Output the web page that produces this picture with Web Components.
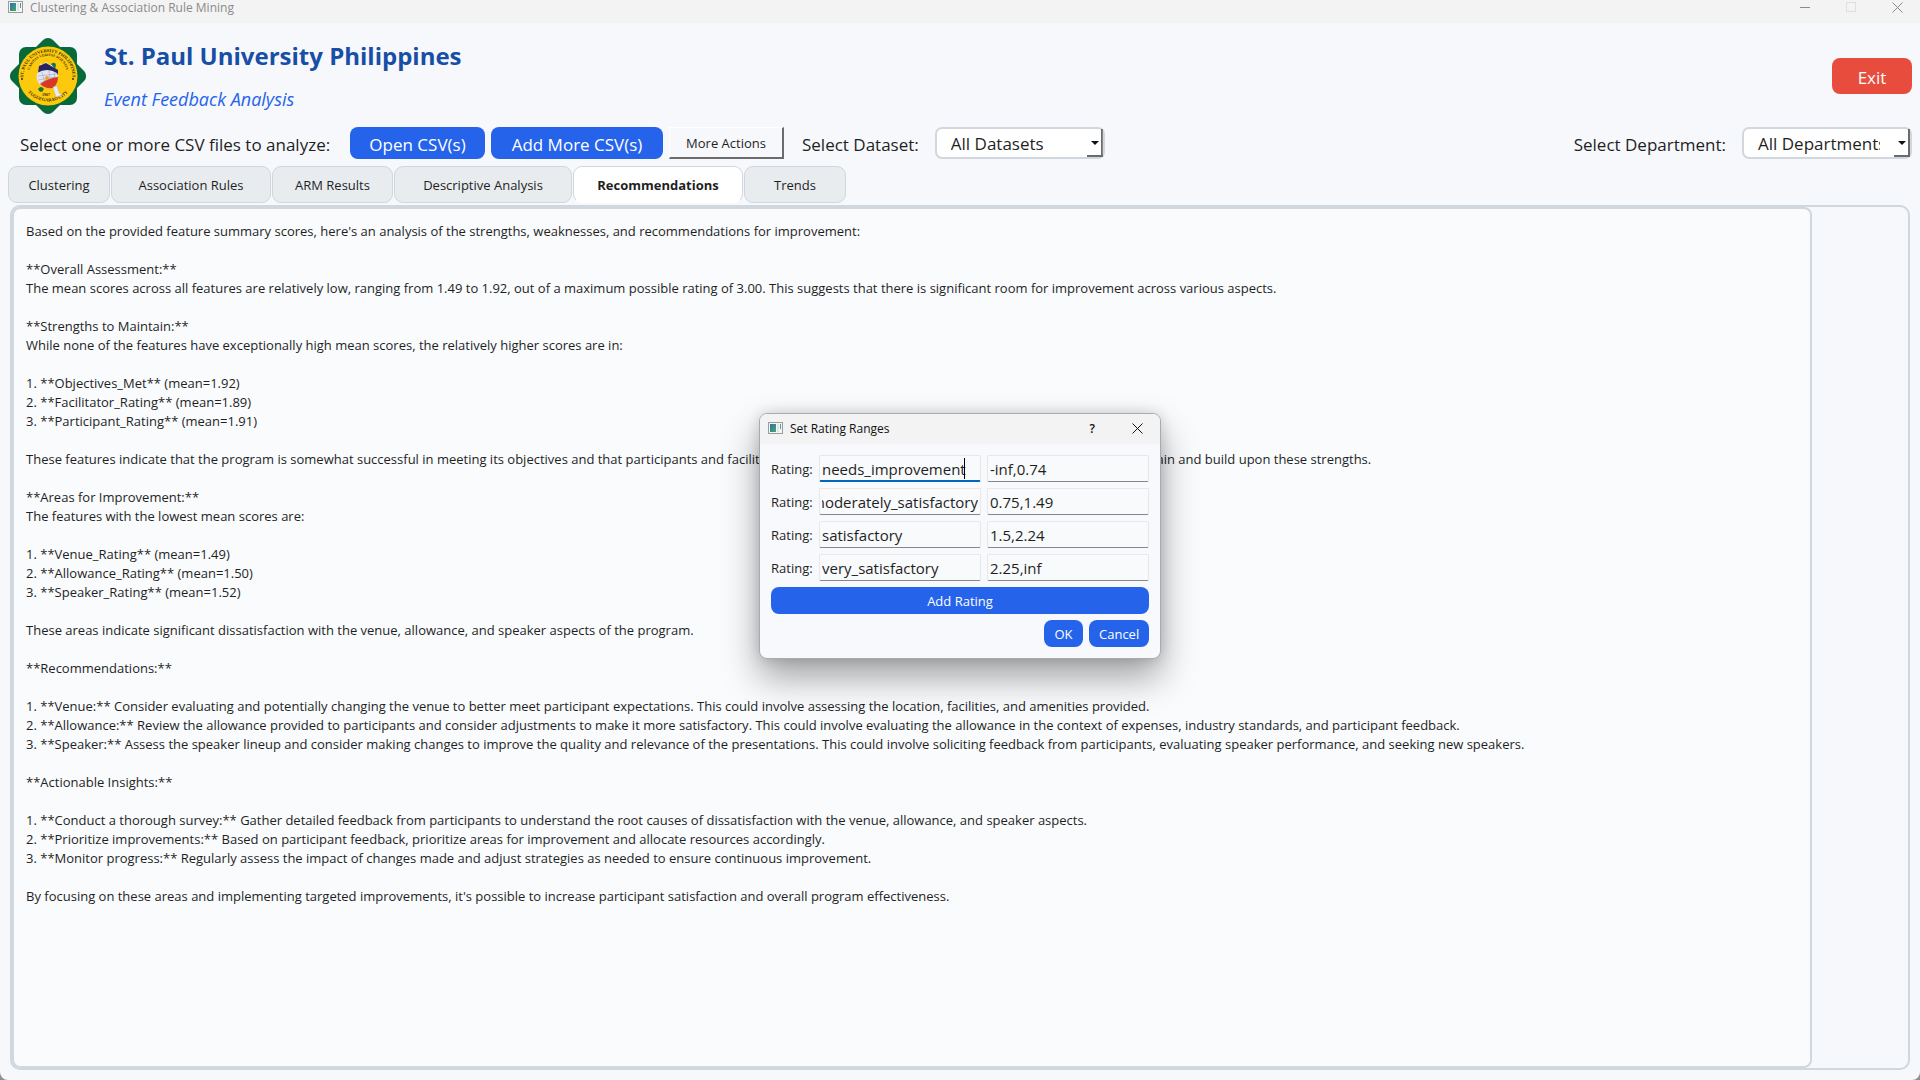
<!DOCTYPE html>
<html lang="en">
<head>
<meta charset="utf-8">
<title>Clustering &amp; Association Rule Mining</title>
<style>
  html, body { margin: 0; height: 100%; }
  body {
    background: #8f8f8f;
    color: #1f1f1f;
    font-family: "Open Sans", "Noto Sans", sans-serif;
    font-size: 13px;
    line-height: 19px;
    overflow: hidden;
  }
</style>
</head>
<body>
<app-window>
  <title-bar slot="title">Clustering &amp; Association Rule Mining</title-bar>
  <app-header></app-header>
  <file-toolbar></file-toolbar>
  <tab-strip></tab-strip>
  <result-pane></result-pane>
  <rating-dialog slot="dialog"></rating-dialog>
</app-window>

<script>
const define = (name, html, setup) => {
  const template = document.createElement('template');
  template.innerHTML = `<style>*{box-sizing:border-box}:host{box-sizing:border-box}</style>${html}`;
  customElements.define(name, class extends HTMLElement {
    constructor() {
      super();
      this.attachShadow({ mode: 'open' }).append(template.content.cloneNode(true));
    }
    connectedCallback() { if (setup) setup(this, this.shadowRoot); }
  });
};

/* Small generic application icon used in both title bars */
define('window-icon', `
<style>:host{display:block;width:15px;height:12px;flex:none} svg{display:block}</style>
<svg width="15" height="12" viewBox="0 0 15 12" aria-hidden="true">
  <defs><linearGradient id="g" x1="0" y1="0" x2="1" y2="1"><stop offset="0" stop-color="#2f6fb0"/><stop offset="1" stop-color="#46a866"/></linearGradient></defs>
  <rect x=".5" y=".5" width="14" height="11" fill="#f4f5f5" stroke="#9b9b9b"/>
  <rect x="2" y="2" width="6" height="8" fill="url(#g)"/>
  <rect x="9" y="2" width="2" height="8" fill="#dfe6e6"/>
  <rect x="12" y="2" width="1" height="5" fill="#4f9e8e"/>
</svg>`);

define('push-button', `
<style>
  :host{display:block}
  button{display:block;width:100%;height:var(--button-height,27px);padding:2px 10px 0;border:0;border-radius:8px;background:var(--button-color,#2563eb);color:#fff;font:inherit;white-space:nowrap}
  :host([size="large"]) button{height:32px;font-size:17px}
  :host([kind="raised"]) button{height:32px;border-radius:0;background:#f7f8fb;color:#1f1f1f;border:solid;border-width:1px 2px 2px 1px;border-color:#fff #6b6b6b #6b6b6b #fff}
</style>
<button type="button"><slot></slot></button>`);

define('combo-box', `
<style>
  :host{display:flex;align-items:center;gap:16px;font-size:17px;white-space:nowrap}
  label{padding-top:2px}
  .box{position:relative;width:170px;height:32px;border:2px solid #d0d7de;border-radius:7px;background:#fff}
  select{appearance:none;display:block;width:100%;height:28px;padding:2px 30px 0 14px;border:0;background:none;color:inherit;font:inherit;line-height:26px}
  .drop{position:absolute;right:0;top:0;width:16px;height:28px;border:solid #6b6b6b;border-width:0 2px 2px 0;pointer-events:none;clip-path:inset(0)}
  .drop::after{content:"";position:absolute;left:4px;top:12px;border:solid transparent;border-width:4px 4px 0;border-top-color:#111}
</style>
<label for="choice"></label>
<div class="box"><select id="choice"><option></option></select><span class="drop"></span></div>`,
(host, root) => {
  root.querySelector('label').textContent = host.getAttribute('label');
  root.querySelector('option').textContent = host.getAttribute('value');
});

define('title-bar', `
<style>
  :host{display:flex;align-items:flex-start;height:23px;padding:1px 17px 0 8px;background:#f3f3f3;color:#8b8b8b;font-size:12px;line-height:14px}
  span{margin-left:7px;flex:1}
  .controls{display:flex;gap:35px;padding-top:1px}
  button{display:block;width:11px;height:11px;padding:0;border:0;background:none}
  svg{display:block}
</style>
<window-icon></window-icon><span><slot></slot></span>
<div class="controls">
  <button type="button" aria-label="Minimize"><svg width="11" height="11"><path d="M0 5.5H10" stroke="#8b8b8b"/></svg></button>
  <button type="button" aria-label="Maximize" disabled><svg width="11" height="11"><rect x=".5" y=".5" width="9" height="9" fill="none" stroke="#dedede"/></svg></button>
  <button type="button" aria-label="Close"><svg width="11" height="11"><path d="M.5.5l10 10M10.500 .5l-10 10" stroke="#8b8b8b"/></svg></button>
</div>`);

define('university-crest', `
<style>:host{display:block;width:78px;height:78px;flex:none} svg{display:block}</style>
<svg width="78" height="78" viewBox="0 0 78 78" role="img" aria-label="St. Paul University Philippines seal">
  <defs>
    <path id="outer" d="M15.500 46.500 A24.500 24.500 0 1 1 62.500 46.500"/>
    <path id="inner" d="M21 44 A19 19 0 1 1 57 44"/>
    <path id="base" d="M17 53 A27 27 0 0 0 61 53"/>
  </defs>
  <g fill="#076a38">
    <rect x="10" y="10" width="58" height="58" rx="7"/>
    <rect x="10" y="10" width="58" height="58" rx="7" transform="rotate(45 39 39)"/>
  </g>
  <circle cx="39" cy="39" r="29.500" fill="#fdc90c"/>
  <g font-family="Liberation Serif" font-weight="bold" fill="#3a2c08" text-anchor="middle">
    <text font-size="4.500"><textPath href="#outer" startOffset="50%">ST. PAUL UNIVERSITY PHILIPPINES</textPath></text>
    <text font-size="3.500"><textPath href="#inner" startOffset="50%">CARITAS VERITAS SCIENTIA</textPath></text>
    <text font-size="4.500"><textPath href="#base" startOffset="50%">TUGUEGARAO CITY</textPath></text>
    <text x="37" y="59" font-size="4">1907</text>
  </g>
  <circle cx="13" cy="42" r="1" fill="#3a2c08"/><circle cx="64" cy="42" r="1" fill="#3a2c08"/>
  <path d="M31 26l3 2 3-3 4 3 4-1 1 5-13 3z" fill="#e9edf0"/>
  <path d="M42 27q4-3 5 1l-1 4z" fill="#17743d"/>
  <path d="M30 29l7-3 12 7v4l-8 2-12-3z" fill="#292462"/>
  <path d="M28 36q10-6 20 0l1 5q-8 0-17 8-6-6-4-13z" fill="#e2e4ef"/>
  <path d="M29 39l19-2M29 43l17-3M31 46l9-4M33 35l3 11M40 34l1 8M45 35l1 6" stroke="#9ca6c8" stroke-width=".6" fill="none"/>
  <path d="M31 47q8-6 18-7 0 7-5 11-8 1-13-4z" fill="#d63a26"/>
  <circle cx="38" cy="41" r="2" fill="#eda12c"/>
  <path d="M44 50l4-1 2 7 3 2-6 2z" fill="#e9edf0" stroke="#b8bdc4" stroke-width=".5"/>
  <path d="M29 52q3-4 6 0l-2 3q-3 0-4-3z" fill="#17743d"/>
</svg>`);

define('app-header', `
<style>
  :host{display:flex;align-items:flex-start;padding:14px 8px 0 9px;height:97px}
  .names{margin:3px 0 0 17px;flex:1}
  h1{margin:0;font-size:24px;line-height:32px;color:#174ea6}
  p{margin:15px 0 0;font-size:18px;line-height:24px;font-style:italic;color:#2563eb}
  push-button{width:80px;--button-color:#e74c3c;--button-height:36px;font-size:17px;margin-top:21px}
</style>
<university-crest></university-crest>
<div class="names"><h1>St. Paul University Philippines</h1><p>Event Feedback Analysis</p></div>
<push-button>Exit</push-button>`);

define('file-toolbar', `
<style>
  :host{display:flex;align-items:center;gap:6px;padding:7px 8px 0 20px}
  .prompt{width:324px;padding-top:2px;font-size:17px;white-space:nowrap}
  .open{width:135px}.add{width:172px}.more{width:115px}
  .dataset{margin-left:12px}.department{margin-left:auto}
</style>
<span class="prompt">Select one or more CSV files to analyze:</span>
<push-button class="open" size="large">Open CSV(s)</push-button>
<push-button class="add" size="large">Add More CSV(s)</push-button>
<push-button class="more" kind="raised">More Actions</push-button>
<combo-box class="dataset" label="Select Dataset:" value="All Datasets"></combo-box>
<combo-box class="department" label="Select Department:" value="All Departments"></combo-box>`);

define('tab-strip', `
<style>
  :host{display:block;padding:7px 8px 2px}
  nav{display:grid;grid-template-columns:102px 160px 121px 178px 170px 102px;gap:1px}
  button{height:37px;padding:2px 0 0;border:1px solid #d0d7de;border-radius:9px;background:#e8ecef;color:inherit;font:inherit;white-space:nowrap}
  button[aria-selected="true"]{background:#fff;border-bottom-color:#fff;font-weight:700}
</style>
<nav role="tablist">
  <button role="tab">Clustering</button><button role="tab">Association Rules</button><button role="tab">ARM Results</button>
  <button role="tab">Descriptive Analysis</button><button role="tab" aria-selected="true">Recommendations</button><button role="tab">Trends</button>
</nav>`);

define('result-pane', `
<style>
  :host{display:flex;flex:1;min-height:0;margin:0 10px 10px;border:2px solid #d0d7de;border-radius:10px}
  article{flex:1;margin-right:96px;padding:13px 12px;border:2px solid #d0d7de;border-radius:8px;background:#f9fbfd;white-space:pre-wrap;overflow:hidden}
</style>
<article></article>`,
(host, root) => {
  root.querySelector('article').textContent = [
    "Based on the provided feature summary scores, here's an analysis of the strengths, weaknesses, and recommendations for improvement:",
    "",
    "**Overall Assessment:**",
    "The mean scores across all features are relatively low, ranging from 1.49 to 1.92, out of a maximum possible rating of 3.00. This suggests that there is significant room for improvement across various aspects.",
    "",
    "**Strengths to Maintain:**",
    "While none of the features have exceptionally high mean scores, the relatively higher scores are in:",
    "",
    "1. **Objectives_Met** (mean=1.92)",
    "2. **Facilitator_Rating** (mean=1.89)",
    "3. **Participant_Rating** (mean=1.91)",
    "",
    "These features indicate that the program is somewhat successful in meeting its objectives and that participants and facilitators are relatively satisfied with it. It is likewise essential to maintain and build upon these strengths.",
    "",
    "**Areas for Improvement:**",
    "The features with the lowest mean scores are:",
    "",
    "1. **Venue_Rating** (mean=1.49)",
    "2. **Allowance_Rating** (mean=1.50)",
    "3. **Speaker_Rating** (mean=1.52)",
    "",
    "These areas indicate significant dissatisfaction with the venue, allowance, and speaker aspects of the program.",
    "",
    "**Recommendations:**",
    "",
    "1. **Venue:** Consider evaluating and potentially changing the venue to better meet participant expectations. This could involve assessing the location, facilities, and amenities provided.",
    "2. **Allowance:** Review the allowance provided to participants and consider adjustments to make it more satisfactory. This could involve evaluating the allowance in the context of expenses, industry standards, and participant feedback.",
    "3. **Speaker:** Assess the speaker lineup and consider making changes to improve the quality and relevance of the presentations. This could involve soliciting feedback from participants, evaluating speaker performance, and seeking new speakers.",
    "",
    "**Actionable Insights:**",
    "",
    "1. **Conduct a thorough survey:** Gather detailed feedback from participants to understand the root causes of dissatisfaction with the venue, allowance, and speaker aspects.",
    "2. **Prioritize improvements:** Based on participant feedback, prioritize areas for improvement and allocate resources accordingly.",
    "3. **Monitor progress:** Regularly assess the impact of changes made and adjust strategies as needed to ensure continuous improvement.",
    "",
    "By focusing on these areas and implementing targeted improvements, it's possible to increase participant satisfaction and overall program effectiveness."
  ].join('\n');
});

define('rating-row', `
<style>
  :host{display:flex;align-items:center;gap:6px}
  label{width:42px;padding-top:1px;white-space:nowrap}
  .field{position:relative;flex:1;min-width:0}
  input{display:block;width:100%;height:27px;padding:0 2px;border:1px solid #e6e8ea;border-bottom-color:#868686;border-radius:2px;background:#f8fafc;color:inherit;font:inherit;font-size:15px;outline:0}
  :host([active]) .name input{padding-top:1px;border-bottom:2px solid #0067c0}
  :host([active]) .name::after{content:"";position:absolute;left:145px;top:3px;width:1px;height:21px;background:#000}
</style>
<label for="name">Rating:</label>
<div class="field name"><input id="name" type="text"></div>
<div class="field"><input id="range" type="text" aria-label="Range"></div>`,
(host, root) => {
  const name = root.getElementById('name');
  name.value = host.getAttribute('name');
  root.getElementById('range').value = host.getAttribute('range');
  name.scrollLeft = name.scrollWidth;
});

define('rating-dialog', `
<style>
  :host{position:absolute;top:413px;left:50%;width:402px;margin-left:-201px;border:1px solid #a9abad;border-radius:8px;background:#f7f9fc;box-shadow:0 18px 36px rgba(0,0,0,.36),0 0 14px rgba(0,0,0,.14);overflow:hidden}
  header{display:flex;align-items:center;height:30px;padding:0 17px 2px 8px;background:#f3f3f3;font-size:12px;color:#111}
  h2{flex:1;margin:0 0 0 7px;font:inherit}
  header button{display:block;padding:0;border:0;background:none;color:inherit;font:inherit;font-weight:600}
  header svg{display:block;margin-left:37px}
  form{display:flex;flex-direction:column;gap:6px;padding:11px}
  .actions{display:flex;justify-content:flex-end;gap:6px}
  .ok{width:39px}.cancel{width:60px}
</style>
<header><window-icon></window-icon><h2>Set Rating Ranges</h2>
  <button type="button" aria-label="Help">?</button>
  <button type="button" aria-label="Close"><svg width="11" height="11"><path d="M.5.5l10 10M10.500 .5l-10 10" stroke="#111"/></svg></button>
</header>
<form>
  <rating-row name="needs_improvement" range="-inf,0.74" active></rating-row>
  <rating-row name="moderately_satisfactory" range="0.75,1.49"></rating-row>
  <rating-row name="satisfactory" range="1.5,2.24"></rating-row>
  <rating-row name="very_satisfactory" range="2.25,inf"></rating-row>
  <push-button>Add Rating</push-button>
  <div class="actions"><push-button class="ok">OK</push-button><push-button class="cancel">Cancel</push-button></div>
</form>`);

define('app-window', `
<style>
  :host{position:relative;display:flex;flex-direction:column;height:100vh;background:#f7f8fb;border-radius:0 0 8px 8px;overflow:hidden}
</style>
<slot name="title"></slot><slot></slot><slot name="dialog"></slot>`);
</script>
</body>
</html>
